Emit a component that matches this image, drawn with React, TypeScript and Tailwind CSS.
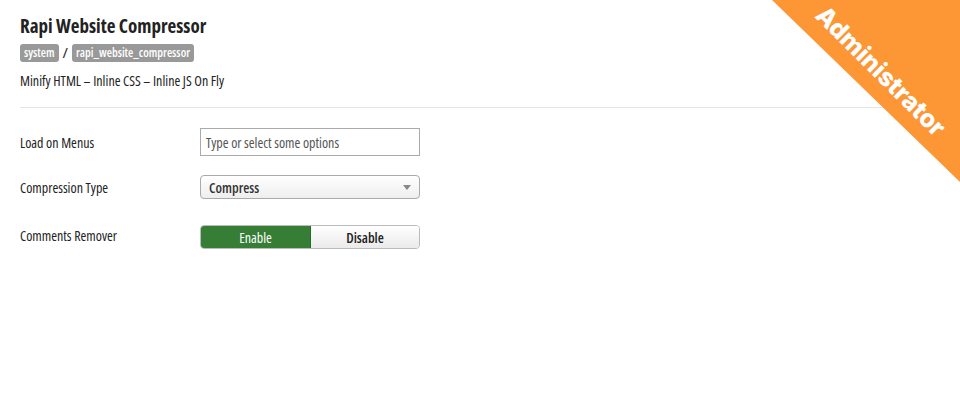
export default function App() {
  return (
    <div className="relative w-[960px] h-[420px] overflow-hidden bg-white font-['Open_Sans',sans-serif] [font-stretch:75%] text-[#222]">
      {/* Header */}
      <div className="px-5 pt-[13px]">
        <h1 className="text-[19px] leading-[26px] font-bold text-[#222]">Rapi Website Compressor</h1>
        <div className="mt-[3px] flex items-center gap-[4px]">
          <span className="rounded-[3px] bg-[#999] px-[4px] text-[12px] leading-[18px] font-semibold text-white">system</span>
          <span className="text-[14px] font-semibold text-[#333]">/</span>
          <span className="rounded-[3px] bg-[#999] px-[4px] text-[12px] leading-[18px] font-semibold text-white">rapi_website_compressor</span>
        </div>
        <p className="mt-[9px] text-[14px] leading-[18px] font-medium text-[#222]">Minify HTML – Inline CSS – Inline JS On Fly</p>
      </div>

      <div className="mx-5 mt-[17px] border-t border-[#e5e5e5]" />

      {/* Form */}
      <div className="px-5 pt-[20px] flex flex-col">
        <div className="flex items-center h-[28px]">
          <label className="w-[180px] text-[14px] font-medium text-[#222]">Load on Menus</label>
          <div className="w-[220px] h-[28px] border border-[#aaa] bg-white flex items-center px-[5px] text-[14px] font-medium text-[#555]">
            Type or select some options
          </div>
        </div>

        <div className="flex items-center h-[24px] mt-[19px]">
          <label className="w-[180px] text-[14px] font-medium text-[#222]">Compression Type</label>
          <div className="w-[220px] h-[24px] rounded-[4px] border border-[#aaa] bg-gradient-to-b from-white to-[#eee] flex items-center justify-between pl-[8px] pr-[8px] text-[14px] font-semibold text-[#333]">
            <span>Compress</span>
            <span className="w-0 h-0 border-l-[4px] border-r-[4px] border-t-[5px] border-l-transparent border-r-transparent border-t-[#888]" />
          </div>
        </div>

        <div className="flex items-center h-[24px] mt-[26px]">
          <label className="w-[180px] text-[14px] font-medium text-[#222] -mt-[3px]">Comments Remover</label>
          <div className="flex w-[220px] h-[24px] rounded-[4px] overflow-hidden border border-[#bbb]">
            <div className="w-[110px] h-full bg-[#367d36] text-white text-[14px] font-medium flex items-center justify-center border-r border-[#2a6a2a]">Enable</div>
            <div className="flex-1 h-full bg-gradient-to-b from-white to-[#eaeaea] text-[#222] text-[14px] font-semibold flex items-center justify-center">Disable</div>
          </div>
        </div>
      </div>

      {/* Corner ribbon */}
      <div className="absolute top-0 right-0 w-[188px] h-[182px] bg-[#fd9635] [clip-path:polygon(0_0,100%_0,100%_100%)]" />
      <div className="absolute top-[56px] left-[791px] w-[180px] text-center rotate-45 font-['Inter',sans-serif] [font-stretch:100%] font-extrabold text-white text-[25px] leading-[30px]">
        Administrator
      </div>
    </div>
  );
}
